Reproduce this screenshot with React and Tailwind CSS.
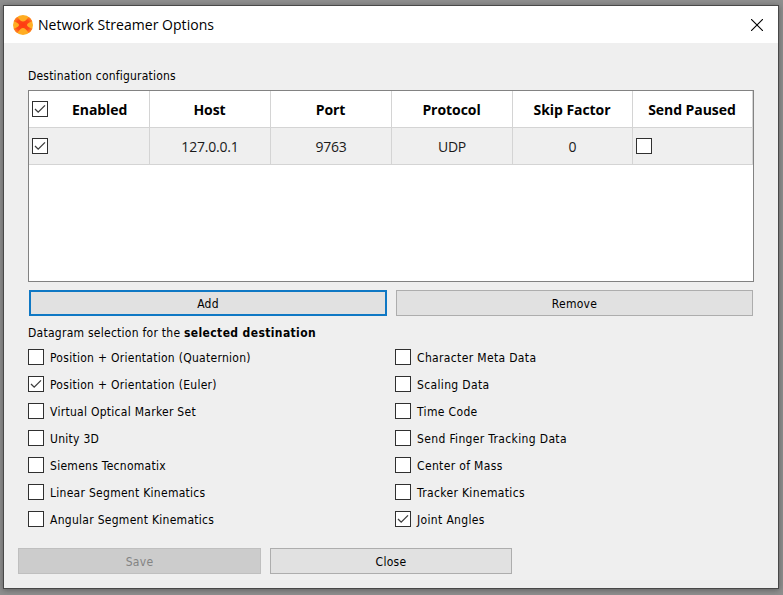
const leftOptions = [
  ['Position + Orientation (Quaternion)', false],
  ['Position + Orientation (Euler)', true],
  ['Virtual Optical Marker Set', false],
  ['Unity 3D', false],
  ['Siemens Tecnomatix', false],
  ['Linear Segment Kinematics', false],
  ['Angular Segment Kinematics', false],
];

const rightOptions = [
  ['Character Meta Data', false],
  ['Scaling Data', false],
  ['Time Code', false],
  ['Send Finger Tracking Data', false],
  ['Center of Mass', false],
  ['Tracker Kinematics', false],
  ['Joint Angles', true],
];

function Checkbox({ checked }) {
  return (
    <span className="block size-4 shrink-0 border border-[#303030] bg-white">
      {checked && (
        <svg viewBox="0 0 14 14" className="block size-3.5" fill="none" stroke="#3c3c3c" strokeWidth="1.3">
          <path d="M2 7 5.2 10.2 12 3.4" />
        </svg>
      )}
    </span>
  );
}

function Option({ label, checked }) {
  return (
    <label className="flex h-[27px] items-start gap-1.5 pt-[6px] whitespace-nowrap">
      <Checkbox checked={checked} />
      <span className="pt-px leading-4">{label}</span>
    </label>
  );
}

function Logo() {
  return (
    <svg viewBox="0 0 20 20" className="size-5 shrink-0">
      <defs>
        <clipPath id="disc">
          <circle cx="10" cy="10" r="10" />
        </clipPath>
        <radialGradient id="cross">
          <stop offset="0" stopColor="#ff3a10" />
          <stop offset="0.7" stopColor="#ff4a16" />
          <stop offset="1" stopColor="#ff7a20" />
        </radialGradient>
      </defs>
      <g clipPath="url(#disc)">
        <rect width="20" height="20" fill="#ffad22" />
        <path
          d="M0 6Q2 2 4.5 2Q7.5 6.5 10 6.5Q12.5 6.5 15.5 2Q18 2 20 6Q14 8 14 10Q14 12 20 14Q18 18 15.5 18Q12.5 13 10 13Q7.5 13 4.5 18Q2 18 0 14Q6 12 6 10Q6 8 0 6Z"
          fill="url(#cross)"
        />
      </g>
    </svg>
  );
}

const headCell = 'flex items-center justify-center border-r border-b border-[#d4d4d4] pt-px pr-px';
const bodyCell = 'flex items-center justify-center border-r border-b border-[#d4d4d4] bg-[#efefef] pt-px';

export default function App() {
  return (
    <div className="h-[595px] w-[783px] overflow-hidden bg-[#8f8f8f] pt-[5px] pl-[3px]">
      <div className="flex h-[584px] w-[776px] flex-col border border-[#484848] bg-[#efefef] font-['DejaVu_Sans_Condensed','DejaVu_Sans',sans-serif] text-[12px] tracking-[0.28px] text-black shadow-[0_1px_6px_rgba(0,0,0,0.35)]">
        <header className="flex h-[37px] shrink-0 items-center bg-white pl-[9px] font-['Open_Sans',sans-serif]">
          <Logo />
          <h1 className="ml-[5px] text-[14px] leading-5 tracking-[0.03px] whitespace-nowrap">Network Streamer Options</h1>
          <svg viewBox="0 0 12 12" className="mr-[15px] ml-auto size-3" stroke="#000" strokeWidth="1.1">
            <path d="M0 0 12 12M12 0 0 12" />
          </svg>
        </header>

        <main className="flex flex-col pl-6">
          <p className="mt-[25px] h-4 leading-4 tracking-[0.2px] whitespace-nowrap">Destination configurations</p>

          <section className="mt-[6px] h-[192px] w-[726px] border border-[#828282] bg-white font-['Open_Sans',sans-serif] text-[14px]">
            <div className="grid h-[37px] grid-cols-[121px_121px_121px_121px_120px_120px] font-bold tracking-[-0.06px]">
              <div className="flex items-center border-r border-b border-[#d4d4d4] pl-[3px]">
                <Checkbox checked />
                <span className="ml-6 pt-px">Enabled</span>
              </div>
              <div className={headCell}>Host</div>
              <div className={headCell}>Port</div>
              <div className={headCell}>Protocol</div>
              <div className={headCell}>Skip Factor</div>
              <div className={headCell}>Send Paused</div>
            </div>
            <div className="grid h-[37px] grid-cols-[121px_121px_121px_121px_120px_120px] tracking-[-0.2px] text-[#1a1a1a]">
              <div className="flex items-center border-r border-b border-[#d4d4d4] bg-[#efefef] pl-[3px]">
                <Checkbox checked />
              </div>
              <div className={bodyCell}>127.0.0.1</div>
              <div className={bodyCell}>9763</div>
              <div className={bodyCell}>UDP</div>
              <div className={bodyCell}>0</div>
              <div className="flex items-center border-r border-b border-[#d4d4d4] bg-[#efefef] pl-[3px]">
                <Checkbox />
              </div>
            </div>
          </section>

          <div className="mt-2 ml-px flex gap-[9px]">
            <button className="h-[26px] w-[358px] border-2 border-[#0f78c4] bg-[#e1e1e1] pt-px">Add</button>
            <button className="h-[26px] w-[357px] border border-[#adadad] bg-[#e1e1e1] pt-px">Remove</button>
          </div>

          <p className="mt-[9px] h-4 leading-4 tracking-[0.26px] whitespace-nowrap">
            Datagram selection for the <b className="tracking-[0.38px]">selected destination</b>
          </p>

          <div className="mt-[2px] grid grid-cols-[367px_367px]">
            <div>
              {leftOptions.map(([label, checked]) => (
                <Option key={label} label={label} checked={checked} />
              ))}
            </div>
            <div className="tracking-[0.35px]">
              {rightOptions.map(([label, checked]) => (
                <Option key={label} label={label} checked={checked} />
              ))}
            </div>
          </div>
        </main>

        <footer className="mt-4 flex gap-[9px] pl-[14px]">
          <button disabled className="h-[26px] w-[243px] border border-[#bfbfbf] bg-[#cccccc] pt-px text-[#838383]">Save</button>
          <button className="h-[26px] w-[242px] border border-[#adadad] bg-[#e1e1e1] pt-px">Close</button>
        </footer>
      </div>
    </div>
  );
}
